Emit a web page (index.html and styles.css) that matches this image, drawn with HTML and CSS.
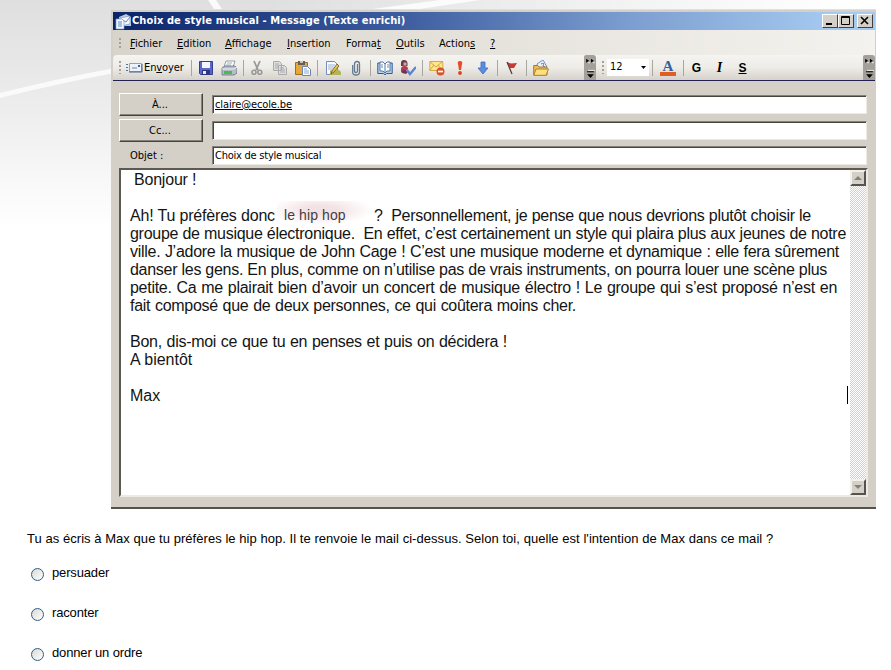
FILE: index.html
```html
<!DOCTYPE html>
<html lang="fr">
<head>
<meta charset="utf-8">
<title>Choix de style musical</title>
<link rel="stylesheet" href="styles.css">
</head>
<body>
<svg class="backdrop" width="891" height="240" viewBox="0 0 891 240" aria-hidden="true">
  <defs><linearGradient id="fade" x1="0" y1="0" x2="0" y2="1"><stop offset="0" stop-color="#dfdfdf"/><stop offset=".45" stop-color="#ededed"/><stop offset=".95" stop-color="#fff"/></linearGradient>
  <linearGradient id="side" x1="0" x2="1"><stop offset=".3" stop-color="#fff" stop-opacity="0"/><stop offset=".95" stop-color="#fff"/></linearGradient></defs>
  <path d="M0 0H891V240H0z" fill="url(#fade)"/>
  <path d="M0 93Q60 78 120 67V72Q60 83 0 98z" fill="#fafafa"/>
  <path d="M208 0h8l8 12h-8zM350 12l90-12h40l-80 12z" fill="#fafafa"/>
  <path d="M0 0H891V240H0z" fill="url(#side)"/>
</svg>
<main class="page">
<section class="window">
  <header class="titlebar">
    <svg class="appicon" width="17" height="17" viewBox="0 0 17 17"><path d="M4 4L11 1l5 3v9H5z" fill="#b8cdec"/><path d="M5 5l10-2v8l-9 2z" fill="#f5f7ff" stroke="#8095b8" stroke-width=".7"/><path d="M6 6l5 3 4-5" fill="none" stroke="#7188b0"/><path d="M1 6h6l2 2v8H1z" fill="#f3f8ff" stroke="#7ca0d2" stroke-width=".7"/><path d="M3 9h4M3 11h4M3 13h4" stroke="#5e82bd"/></svg>
    <h1 class="title">Choix de style musical - Message (Texte enrichi)</h1>
    <div class="winbtns">
      <svg class="winbtn" viewBox="0 0 14 12"><path d="M3 9h6" stroke="#000" stroke-width="2"/></svg>
      <svg class="winbtn" viewBox="0 0 14 12"><path d="M2.5 1.500h8v8h-8zM2 2.500h9" fill="none" stroke="#000"/></svg>
      <svg class="winbtn close" viewBox="0 0 14 12"><path d="M3 2l7 7M10 2l-7 7" stroke="#000" stroke-width="1.6"/></svg>
    </div>
  </header>
  <nav class="menubar">
    <i class="grip"></i>
    <span class="m1"><u>F</u>ichier</span><span class="m2"><u>E</u>dition</span><span class="m3"><u>A</u>ffichage</span><span class="m4"><u>I</u>nsertion</span><span class="m5">Forma<u>t</u></span><span class="m6"><u>O</u>utils</span><span class="m7">Action<u>s</u></span><span class="m8"><u>?</u></span>
  </nav>
  <div class="toolbar">
    <i class="grip"></i>
    <svg class="sendicon" width="17" height="12" viewBox="0 0 17 12"><path d="M0 2.5h2M0 5.5h2M0 8.5h2" stroke="#5271a5"/><path d="M3.5 1.5h12v8h-12z" fill="#edf2fc" stroke="#8fa2c2"/><path d="M3 10h13V2" fill="none" stroke="#49638f"/><path d="M6 6h5" stroke="#7181a0"/><path d="M12 3h2v2h-2z" fill="#385f9d"/></svg>
    <span class="send">En<u>v</u>oyer</span>
    <i class="sep"></i>
    <svg class="ic" viewBox="0 0 16 16"><path d="M1.5 1.5h13v13h-12l-1-1z" fill="#5a67c6" stroke="#343d91"/><path d="M4 2h8v6H4z" fill="#f2f4ff"/><path d="M4 10h8v5H4z" fill="#2d367f"/><path d="M5 11h3v3H5z" fill="#e8edff"/></svg>
    <svg class="ic" viewBox="0 0 16 16"><path d="M5 1h9l-2 6H3z" fill="#fff" stroke="#7b8796" stroke-width=".8"/><path d="M6 3h5M5 5h5" stroke="#a1adbd"/><path d="M1 8l3-2h10l2 2v5l-3 2H1z" fill="#b4bec9" stroke="#64707e" stroke-width=".8"/><path d="M1 9h12l3-2" fill="none" stroke="#eef3f7"/><path d="M3 11h8v3H3z" fill="#4aba50"/></svg>
    <i class="sep tight"></i>
    <svg class="ic" viewBox="0 0 16 16"><path d="M5 1l4 9M11 1L7 10" stroke="#999" stroke-width="1.8"/><circle cx="5" cy="12.3" r="2" fill="none" stroke="#999" stroke-width="1.6"/><circle cx="10.8" cy="12.3" r="2" fill="none" stroke="#999" stroke-width="1.6"/></svg>
    <svg class="ic" viewBox="0 0 16 16"><path d="M1.5 1.5h6l2 2v7h-8zM6.500 5.500h6l2 2v7h-8z" fill="#ddd" stroke="#aaa"/><path d="M3 4h4M3 6h3M3 8h3M8 8h4M8 10h5M8 12h5" stroke="#aaa"/></svg>
    <svg class="ic" viewBox="0 0 16 16"><path d="M.5 2.500h12v12H.5z" fill="#e9a836" stroke="#a36b20"/><path d="M3 1h7v4H3z" fill="#665f58"/><path d="M5 .8h3v2H5z" fill="#d5d1c8"/><path d="M7.500 6.500h5l3 3v6h-8z" fill="#f7faff" stroke="#6b84b0"/><path d="M9 9h3M9 11h5M9 13h5" stroke="#8da7d1"/></svg>
    <i class="sep loose"></i>
    <svg class="ic" viewBox="0 0 16 16"><path d="M1.500 1.500h8l3 3v10h-11z" fill="#f7faff" stroke="#748eb8"/><path d="M3 5h7M3 7h6M3 9h5" stroke="#9fb3d3"/><path d="M5 11c2-3 3 2 5 0s3-2 6 1v3H5z" fill="#b1b55b"/><path d="M7 11L12 4l2 2-5 6-3 2z" fill="#f3c640" stroke="#635131" stroke-width=".8"/></svg>
    <svg class="ic" viewBox="0 0 16 16"><path d="M9.500 4v7q0 1.500-1.500 1.500T6.500 11V4Q6.500 1.500 9 1.500T11.500 4v8Q11.500 15 8 15t-3.300-3V5" fill="none" stroke="#657b91" stroke-width="1.300"/></svg>
    <i class="sep"></i>
    <svg class="ic" viewBox="0 0 16 16"><path d="M.8 3v10.500h5.500L8 14.800l1.700-1.300h5.500V3H10L8 4 6 3z" fill="#b5d1ed" stroke="#345b91"/><path d="M3 2h3l2 2 2-2h3v9h-3l-2 2-2-2H3zM8 4v9" fill="#fff" stroke="#5179ac"/><path d="M4 5h2M4 7h2M10 5h2M10 7h2" stroke="#718daf"/></svg>
    <svg class="ic" viewBox="0 0 16 16"><path d="M1 3q0-3 3-3t3.500 3v3H1z" fill="#663b50"/><path d="M3.500 2.500h3v3h-3z" fill="#dba7a1"/><path d="M1 9q0-3 3.500-3T8 9l-3 3-4-1z" fill="#b53a4b"/><path d="M1 11l4-1 3 2-2 2-4-1z" fill="#6a3753"/><path d="M7 10l3 4 6-7" fill="none" stroke="#6083d0" stroke-width="2.400"/></svg>
    <i class="sep"></i>
    <svg class="ic" viewBox="0 0 16 16"><path d="M.8 1.500h13v9H.8z" fill="#ffe78a" stroke="#d9a93f"/><path d="M1 2l6 5 6-5M1 10l4-5M13 10L9 5" fill="none" stroke="#d1a44a"/><circle cx="11.500" cy="11.500" r="4" fill="#d8532d"/><path d="M9 11.500h5" stroke="#fff" stroke-width="1.700"/></svg>
    <svg class="ic" viewBox="0 0 16 16"><path d="M5.700 2q2.300-2 4.600 0L9 10H7z" fill="#e74a24"/><circle cx="8" cy="13" r="1.900" fill="#dc4120"/></svg>
    <svg class="ic" viewBox="0 0 16 16"><path d="M6 2h4v6h3l-5 6-5-6h3z" fill="#588de1" stroke="#4168bb" stroke-width=".8"/></svg>
    <i class="sep"></i>
    <svg class="ic" viewBox="0 0 16 16"><path d="M3 2l4 1.500L13 3l-3 5-4 0z" fill="#cb3930"/><path d="M3 2l5 12" stroke="#5c3432" stroke-width="1.200"/></svg>
    <i class="sep"></i>
    <svg class="ic" viewBox="0 0 16 16"><path d="M4 4l6-4 4 7-7 4z" fill="#eaf2ff" stroke="#7890b6"/><path d="M8 4q4-2 2 2l2 1" fill="none" stroke="#5677aa"/><path d="M.7 5.500h4L6 7h8v8H.7z" fill="#eebd4d" stroke="#a4792f"/><path d="M3 9h12.500L13 15.300H.8z" fill="#ffdf7d" stroke="#ae8339"/></svg>
    <svg class="more first" viewBox="0 0 12 26"><path d="M2 4l3 2-3 2zM7 4l3 2-3 2zM3 17h7v1H3zM3 20h7l-3.500 4z" fill="#000"/><path d="M4 8h2M9 8h2M4 16h7" stroke="#eee"/></svg>
    <i class="grip second"></i>
    <div class="size"><span>12</span><svg width="7" height="4" viewBox="0 0 7 4"><path d="M1 0h5L3.500 3z"/></svg></div>
    <i class="sep"></i>
    <span class="fontcolor">A</span>
    <i class="sep"></i>
    <b class="fmt">G</b><b class="fmt italic">I</b><b class="fmt under">S</b>
    <svg class="more last" viewBox="0 0 12 26"><path d="M2 4l3 2-3 2zM7 4l3 2-3 2zM3 17h7v1H3zM3 20h7l-3.500 4z" fill="#000"/><path d="M4 8h2M9 8h2M4 16h7" stroke="#eee"/></svg>
  </div>
  <div class="fields">
    <button class="btn">À...</button><div class="field address"><u>claire@ecole.be</u></div>
    <button class="btn">Cc...</button><div class="field"></div>
    <label class="label">Objet :</label><div class="field subject">Choix de style musical</div>
  </div>
  <div class="body">
    <div class="text">
      <p class="hello">Bonjour !</p>
      <p>&nbsp;</p>
      <p class="l1"><span class="ask">Ah! Tu préfères donc</span><span class="choice">le hip hop</span><span class="rest">?&nbsp; Personnellement, je pense que nous devrions plutôt choisir le</span></p>
      <p class="fit l2">groupe de musique électronique.&nbsp; En effet, c’est certainement un style qui plaira plus aux jeunes de notre</p>
      <p class="fit l3">ville. J’adore la musique de John Cage ! C’est une musique moderne et dynamique : elle fera sûrement</p>
      <p class="fit l4">danser les gens. En plus, comme on n’utilise pas de vrais instruments, on pourra louer une scène plus</p>
      <p class="fit l5">petite. Ca me plairait bien d’avoir un concert de musique électro ! Le groupe qui s’est proposé n’est en</p>
      <p class="fit l6">fait composé que de deux personnes, ce qui coûtera moins cher.</p>
      <p>&nbsp;</p>
      <p class="fit l7">Bon, dis-moi ce que tu en penses et puis on décidera !</p>
      <p>A bientôt</p>
      <p>&nbsp;</p>
      <p class="sign"><span>Max</span><i class="caret"></i></p>
    </div>
    <div class="scroll">
      <svg class="arrow" viewBox="0 0 12 12"><path d="M2 8h8L6 4z" fill="#85817a"/></svg>
      <svg class="arrow" viewBox="0 0 12 12"><path d="M2 4h8L6 8z" fill="#85817a"/></svg>
    </div>
  </div>
</section>
<section class="quiz">
  <p class="question">Tu as écris à Max que tu préfères le hip hop. Il te renvoie le mail ci-dessus. Selon toi, quelle est l'intention de Max dans ce mail ?</p>
  <label class="option"><input type="radio" name="q"><span>persuader</span></label>
  <label class="option"><input type="radio" name="q"><span>raconter</span></label>
  <label class="option"><input type="radio" name="q"><span>donner un ordre</span></label>
</section>
</main>
</body>
</html>
```
FILE: styles.css
```css
* { box-sizing: border-box; }
body { margin: 0; background: #fff; color: #000; font-family: "Liberation Sans", Arial, sans-serif; overflow: hidden; }
p, h1 { margin: 0; }
.backdrop { position: absolute; left: 0; top: 0; z-index: -1; }
.page { padding-top: 9px; height: 670px; }
.window {
  width: 765px; height: 500px; margin-left: 111px; padding: 2px 1px 0 2px;
  background: #d4d0c8; border-top: 1px solid #e4e0d7; border-bottom: 2px solid #55544c;
  font: 11px/14px "DejaVu Sans Condensed", "DejaVu Sans", sans-serif;
}
.titlebar { height: 18px; display: flex; align-items: center; padding-left: 2px; background: linear-gradient(90deg, #0a246a, #3d5da0 38%, #7d9ed0 68%, #a6caf0 95%); }
.appicon { flex: none; }
.title { color: #fff; font: bold 11px/18px "DejaVu Sans Condensed", "DejaVu Sans", sans-serif; white-space: nowrap; letter-spacing: .1px; }
.winbtns { margin-left: auto; display: flex; padding-right: 2px; }
.winbtn { width: 16px; height: 14px; background: #d4d0c8; border: 1px solid; border-color: #fff #404040 #404040 #fff; }
.close { margin-left: 3px; }
.menubar { height: 25px; display: flex; align-items: center; padding: 2px 0 0 6px; background: linear-gradient(90deg, #d8d4cc, #f4f2ee); white-space: nowrap; }
.grip { flex: none; width: 2px; height: 13px; background: repeating-linear-gradient(#a5a199 0 2px, transparent 2px 4px); }
.menubar .grip { margin-right: 9px; height: 11px; }
.m1 { width: 47px; } .m2 { width: 48px; } .m3 { width: 62px; } .m4 { width: 59px; } .m5 { width: 50px; } .m6 { width: 43px; } .m7 { width: 51px; }
.toolbar { height: 26px; display: flex; align-items: center; padding-left: 6px; border-bottom: 1px solid #242052; background: linear-gradient(#f5f4f1, #eeece7 50%, #d5d2cb); border-radius: 4px 0 0 0; white-space: nowrap; }
.sendicon { flex: none; margin-left: 5px; }
.send { width: 44px; margin: 0 0 0 1px; letter-spacing: -.1px; }
.sep { flex: none; width: 1px; height: 16px; margin: 0 2px 0 3px; background: #aaa69e; }
.tight { margin-right: 1px; }
.loose { margin-right: 3px; }
.ic { flex: none; width: 16px; height: 16px; margin: 0 3.5px; }
.more { flex: none; width: 12px; height: 25px; background: #a3a099; border-radius: 2px 3px 0 0; }
.first { margin-left: 32px; }
.last { margin-left: auto; }
.second { margin: 0 3px 0 6px; }
.size { width: 42px; height: 17px; flex: none; background: #fff; display: flex; align-items: center; justify-content: space-between; padding: 0 2px 2px 3px; }
.size svg { flex: none; margin-top: 2px; }
.fontcolor { width: 16px; height: 17px; margin: 0 4px 0 5px; border-bottom: 4px solid #e35c24; color: #365f9f; text-align: center; font: bold 15px/14px "Liberation Serif", serif; }
.fmt { width: 23px; text-align: center; font: bold 12px/16px "Liberation Sans", sans-serif; padding-right: 2px; }
.italic { font: italic bold 14px/16px "Liberation Serif", serif; }
.under { text-decoration: underline; font-size: 12px; }
.fields { display: grid; grid-template-columns: 84px 655px; grid-template-rows: 23px 23px 20px; column-gap: 9px; row-gap: 3px; align-items: center; padding: 12px 0 0 6px; }
.btn { height: 23px; padding: 0 2px 0 0; background: #d4d0c8; border: 1px solid; border-color: #fff #46443f #46443f #fff; box-shadow: inset -1px -1px #85827b; font: inherit; color: #000; }
.label { padding: 1px 0 0 11px; }
.field { height: 19px; background: #fff; border: 1px solid; border-color: #85827b #eeeae3 #eeeae3 #85827b; box-shadow: inset 1px 1px #46443f; padding: 0 0 0 2px; line-height: 17px; }
.address { letter-spacing: -.12px; }
.subject { letter-spacing: -.24px; }
.body { display: flex; width: 749px; height: 329px; margin: 3px 0 0 6px; background: #fff; border: 2px solid #46443f; border-top-color: #5d5a54; border-left-color: #5d5a54; border-right-color: #eeeae3; border-bottom-color: #eeeae3; }
.text { width: 729px; padding: 1px 0 0 9px; font: 16px/18px "Liberation Sans", Arial, sans-serif; color: #141414; white-space: nowrap; }
.text p { height: 18px; }
.text .hello { padding-left: 4px; letter-spacing: -.2px; }
.l1 { display: flex; }
.ask { width: 147px; letter-spacing: -.18px; }
.choice { width: 97px; height: 23px; margin-top: -6px; padding: 5px 0 0 7px; font-size: 14px; letter-spacing: .1px; color: #463c3f; background: radial-gradient(ellipse 52px 15px at 44px 9px, #f3e2e5 30%, #fff0); }
.rest { width: 437px; letter-spacing: -.28px; text-align-last: justify; white-space: normal; }
.fit { letter-spacing: -.28px; text-align-last: justify; white-space: normal; }
.l2 { width: 716px; } .l3 { width: 709px; } .l4 { width: 697px; } .l5 { width: 707px; } .l6 { width: 446px; } .l7 { width: 377px; }
.sign { display: flex; justify-content: space-between; }
.caret { width: 1px; height: 18px; background: #000; margin: -1px 2px 0 0; }
.scroll { width: 16px; display: flex; flex-direction: column; justify-content: space-between; background: repeating-conic-gradient(#d4d0c8 0 25%, #fff 0 50%) 0 0 / 2px 2px; }
.arrow { width: 16px; height: 16px; background: #d4d0c8; border: 2px solid; border-color: #f3f1ec #55534e #55534e #f3f1ec; }
.quiz { padding: 22px 0 0 27px; font-size: 13px; line-height: 16px; white-space: nowrap; }
.question { margin-bottom: 18px; letter-spacing: .048px; }
.option { display: flex; height: 40px; align-items: flex-start; letter-spacing: -.15px; }
.option input { appearance: none; width: 13px; height: 13px; margin: 3px 8px 0 4px; border: 1px solid #2f5c8c; border-radius: 50%; background: linear-gradient(135deg, #d8d8d2, #fff); }
```
